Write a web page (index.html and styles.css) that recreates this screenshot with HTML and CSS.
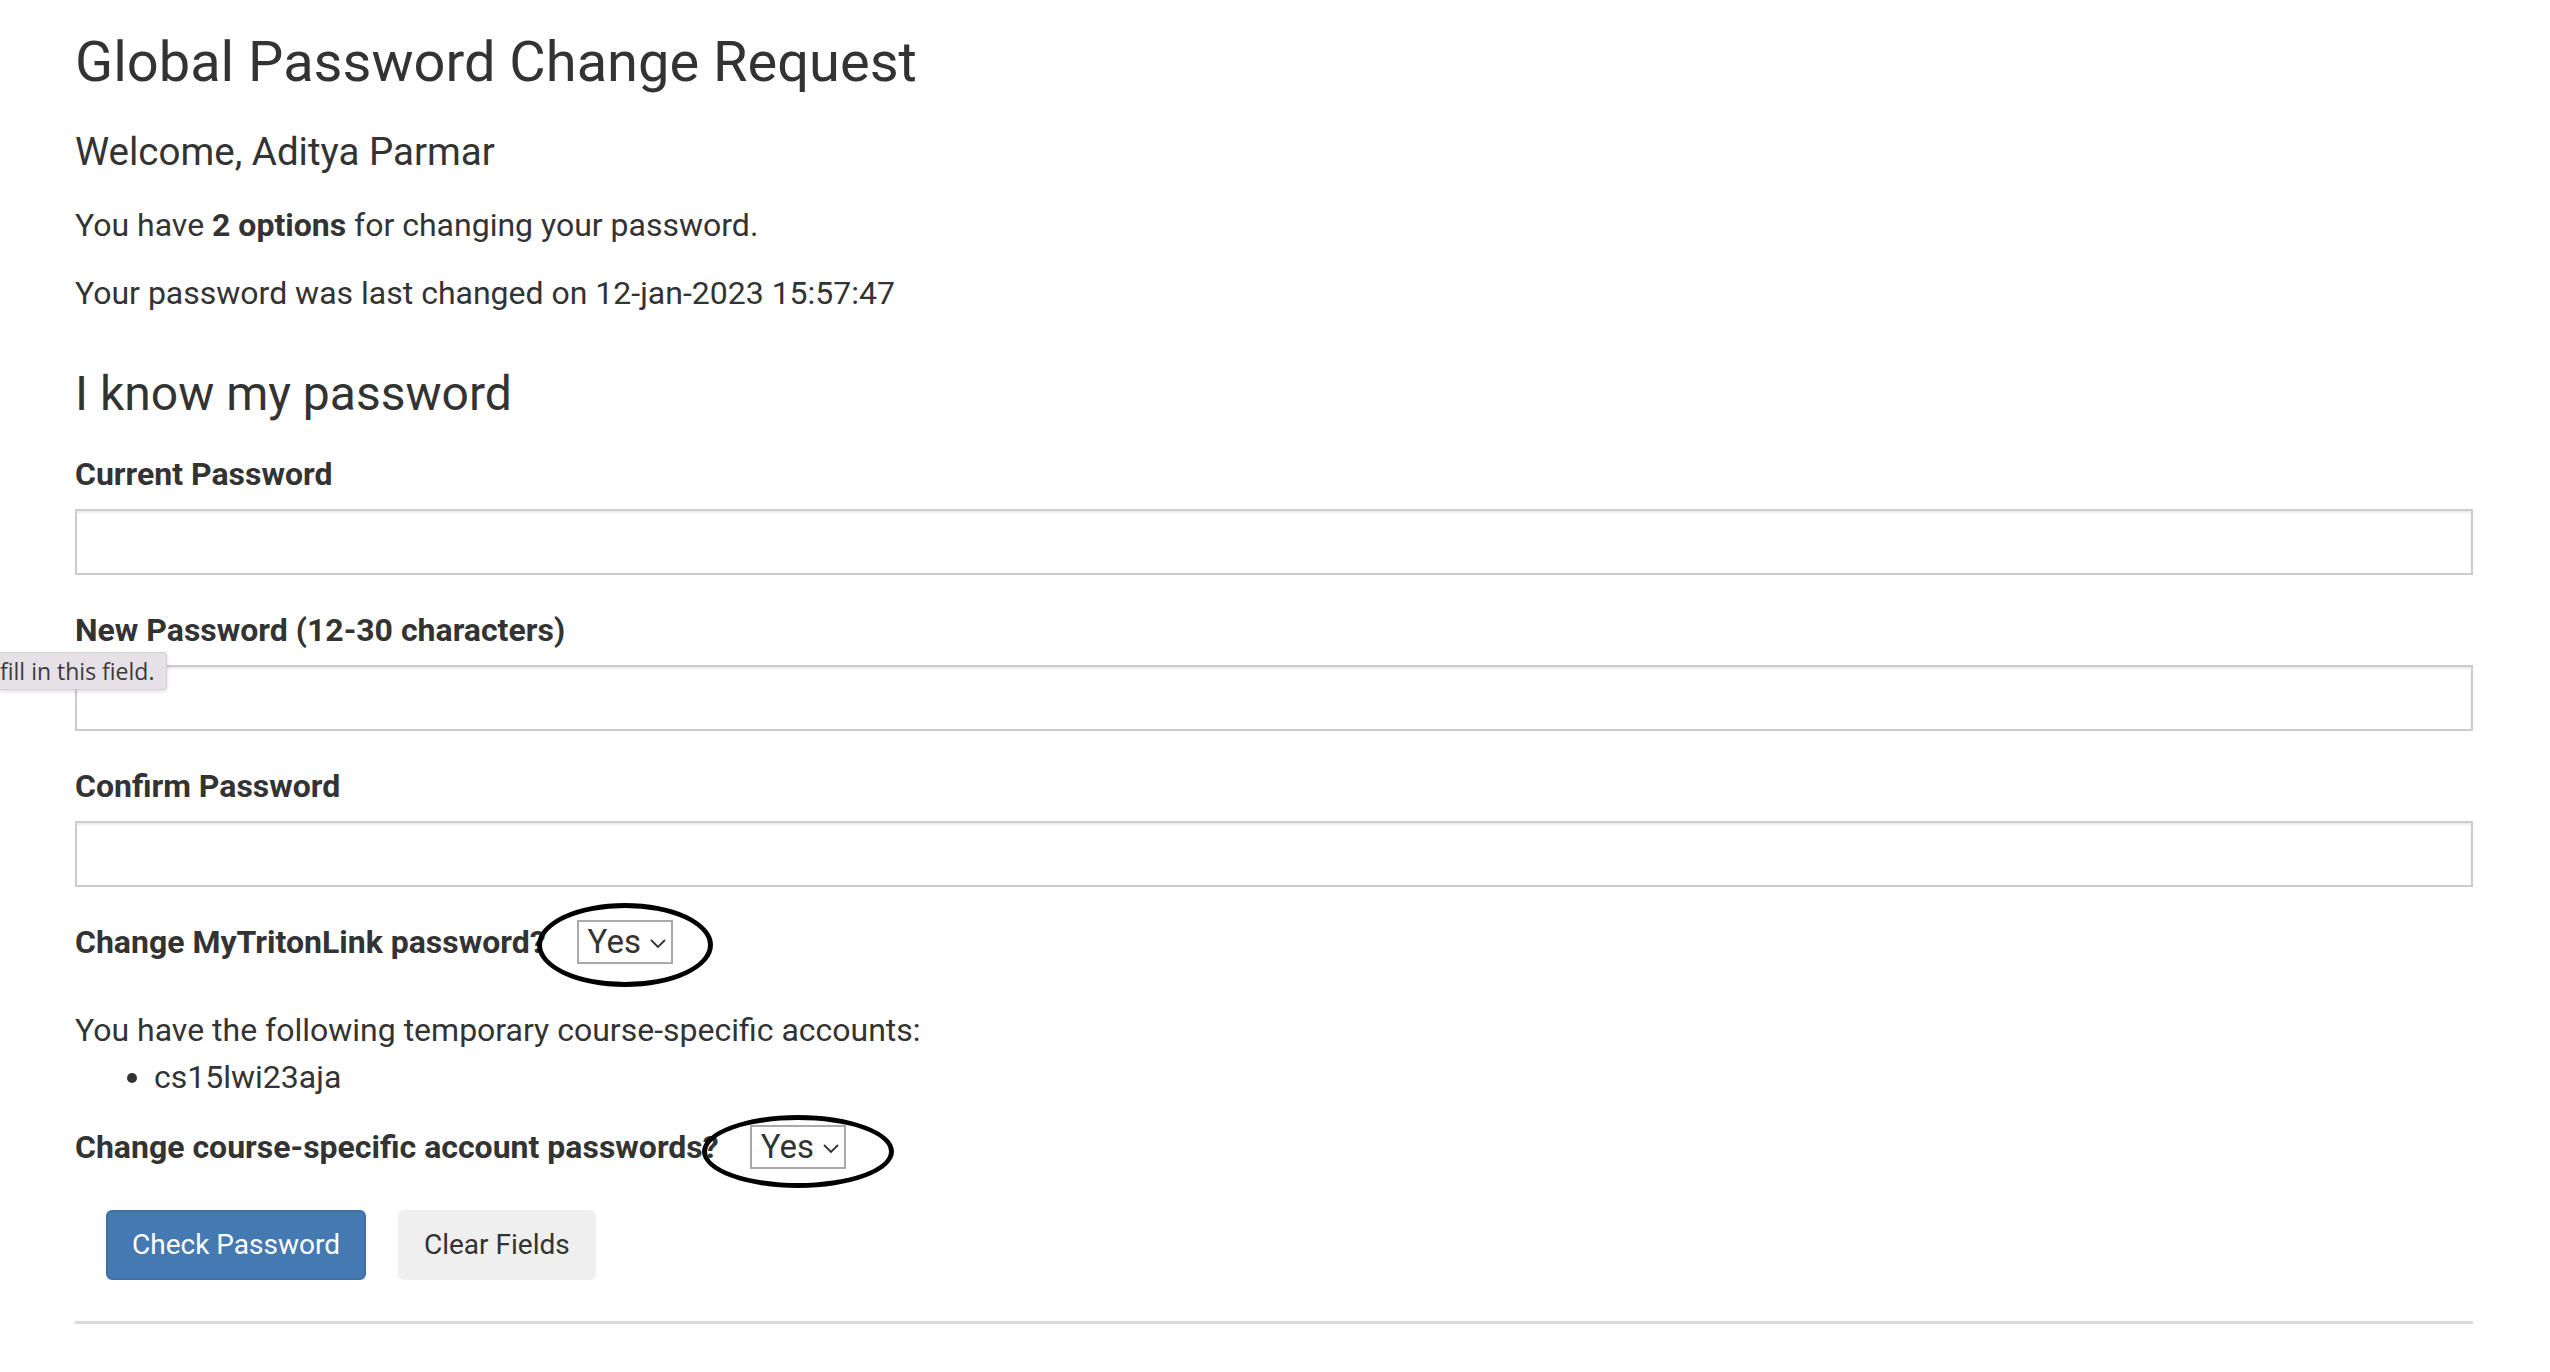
FILE: index.html
```html
<!DOCTYPE html>
<html lang="en">
<head>
<meta charset="utf-8">
<title>Global Password Change Request</title>
<link rel="stylesheet" href="styles.css">
</head>
<body>
<div class="page">
  <h1 class="title">Global Password Change Request</h1>
  <h4 class="welcome">Welcome, Aditya Parmar</h4>
  <p class="info">You have <strong>2 options</strong> for changing your password.</p>
  <p class="info">Your password was last changed on 12-jan-2023 15:57:47</p>

  <h2 class="section">I know my password</h2>
  <form class="form">
    <div class="field">
      <label class="label">Current Password</label>
      <div class="input"></div>
    </div>
    <div class="field">
      <label class="label">New Password (12-30 characters)</label>
      <div class="input"></div>
    </div>
    <div class="field">
      <label class="label">Confirm Password</label>
      <div class="input"></div>
    </div>

    <div class="choice">
      <span class="label">Change MyTritonLink password?</span>
      <span class="select-wrap">
        <span class="select">Yes<svg class="chev" width="16" height="9" viewBox="0 0 16 9"><path d="M1 1 L8 8 L15 1" fill="none" stroke="#333" stroke-width="1.8"/></svg></span>
        <span class="ring ring-a"></span>
      </span>
    </div>

    <p class="accounts">You have the following temporary course-specific accounts:</p>
    <ul class="acct-list">
      <li>cs15lwi23aja</li>
    </ul>

    <div class="choice choice-b">
      <span class="label">Change course-specific account passwords?</span>
      <span class="select-wrap">
        <span class="select">Yes<svg class="chev" width="16" height="9" viewBox="0 0 16 9"><path d="M1 1 L8 8 L15 1" fill="none" stroke="#333" stroke-width="1.8"/></svg></span>
        <span class="ring ring-b"></span>
      </span>
    </div>

    <div class="buttons">
      <span class="btn btn-primary">Check Password</span>
      <span class="btn btn-default">Clear Fields</span>
    </div>
  </form>
  <div class="rule"></div>
</div>
<div class="tooltip">fill in this field.</div>
</body>
</html>
```

FILE: styles.css
```css
html, body {
  margin: 0;
  padding: 0;
  background: #ffffff;
}
body {
  font-family: Roboto, "Helvetica Neue", Arial, sans-serif;
  color: #333333;
  font-size: 32px;
  line-height: 44px;
}
.page {
  padding: 30px 77px 40px 75px;
}
.title {
  font-size: 56px;
  line-height: 64px;
  font-weight: 400;
  margin: 0 0 36px 0;
}
.welcome {
  font-size: 38.5px;
  line-height: 44px;
  font-weight: 400;
  margin: 0 0 29px 0;
}
.info {
  margin: 0 0 24px 0;
}
.info strong {
  font-weight: 700;
}
.section {
  font-size: 48px;
  line-height: 56px;
  font-weight: 400;
  margin: 51px 0 30px 0;
}
.form {
  margin: 0;
}
.field {
  display: flex;
  flex-direction: column;
  margin-bottom: 33px;
}
.label {
  font-weight: 700;
  display: block;
  margin-bottom: 13px;
}
.input {
  height: 62px;
  border: 2px solid #cccccc;
  box-shadow: inset 0 2px 2px rgba(0,0,0,0.075);
  background: #fff;
}
.choice {
  display: flex;
  align-items: flex-start;
  height: 44px;
}
.choice .label {
  margin-bottom: 0;
}
.select-wrap {
  position: relative;
  margin-left: 31px;
  display: inline-block;
}
.select {
  display: flex;
  align-items: center;
  box-sizing: border-box;
  height: 44px;
  width: 96px;
  padding-left: 9px;
  border: 2px solid #a9a9a9;
  font-size: 33px;
  line-height: 40px;
  background: #fff;
}
.chev {
  margin-left: 9px;
  margin-top: 3px;
}
.ring {
  position: absolute;
  border: 5px solid #000;
  border-radius: 50%;
  box-sizing: border-box;
}
.ring-a {
  left: -40px;
  top: -17px;
  width: 176px;
  height: 84px;
}
.ring-b {
  left: -48px;
  top: -10px;
  width: 192px;
  height: 73px;
}
.accounts {
  margin: 44px 0 0 0;
}
.acct-list {
  margin: 3px 0 26px 0;
  padding-left: 79px;
}
.buttons {
  display: flex;
  gap: 32px;
  margin-top: 41px;
  padding-left: 31px;
}
.btn {
  display: inline-block;
  box-sizing: border-box;
  height: 70px;
  padding: 0 24px;
  font-size: 28px;
  line-height: 66px;
  border-radius: 6px;
  border: 2px solid transparent;
}
.btn-primary {
  background: #4479b2;
  border-color: #3e70a6;
  color: #ffffff;
}
.btn-default {
  background: #efefef;
  border-color: #efefef;
  color: #333333;
}
.rule {
  margin-top: 41px;
  height: 0;
  border-top: 3px solid #d9d9d9;
}
.tooltip {
  position: absolute;
  left: 0;
  top: 652px;
  height: 38px;
  box-sizing: border-box;
  padding: 0 12px 0 0;
  background: #e6e1e7;
  border: 1px solid #d2cdd3;
  border-left: none;
  border-radius: 0 4px 4px 0;
  box-shadow: 0 2px 4px rgba(0,0,0,0.12);
  font-family: "Open Sans", Roboto, sans-serif;
  font-size: 23px;
  line-height: 36px;
  color: #3a3a3a;
}
```
